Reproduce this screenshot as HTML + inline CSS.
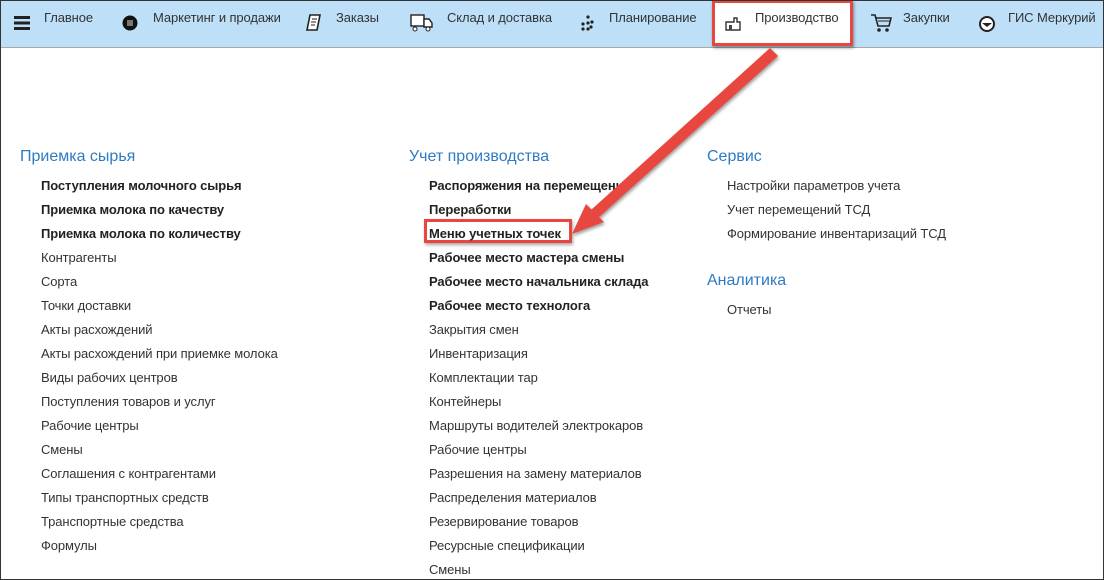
<!DOCTYPE html>
<html><head><meta charset="utf-8"><style>
*{margin:0;padding:0;box-sizing:border-box}
body{width:1104px;height:580px;overflow:hidden;background:#fff;font-family:"Liberation Sans",Arial,sans-serif;position:relative}
.frame{position:absolute;left:0;top:0;width:1104px;height:580px;border:1px solid #333;pointer-events:none}
.top{position:absolute;left:0;top:0;width:1104px;height:48px;background:#bde0f8;border-bottom:1px solid #a8a8a8}
.nav{position:absolute;top:10px;font-size:13px;color:#333;white-space:nowrap;letter-spacing:-0.1px}
.ic{position:absolute}
.prod{position:absolute;left:712px;top:0;width:141px;height:46px;background:#fff;border:3px solid #e8473f;box-shadow:1px 2px 3px rgba(0,0,0,.4)}
.h{position:absolute;font-size:16px;color:#2e7bc4;margin-top:1px}
.it{position:absolute;font-size:13px;color:#333;white-space:nowrap;letter-spacing:-0.1px;margin-top:1px}
.b{font-weight:bold;color:#222}
</style></head><body>
<div class="top"></div>
<div class="prod"></div>
<svg class="ic" style="left:14px;top:16px" width="16" height="14"><rect y="0" width="16" height="3" fill="#222"/><rect y="5.5" width="16" height="3" fill="#222"/><rect y="11" width="16" height="3" fill="#222"/></svg>
<div class="nav" style="left:44px">Главное</div>
<svg class="ic" style="left:122px;top:15px" width="16" height="16"><circle cx="8" cy="8" r="7.5" fill="#111"/><rect x="5" y="5" width="6" height="6" fill="#777"/></svg>
<div class="nav" style="left:153px">Маркетинг и продажи</div>
<svg class="ic" style="left:306px;top:14px" width="16" height="18"><path d="M4 1h10l-3 15H1z" fill="#fff" stroke="#222" stroke-width="1.6"/><path d="M6 5h5M5 8h5M5 11h4" stroke="#222"/></svg>
<div class="nav" style="left:336px">Заказы</div>
<svg class="ic" style="left:410px;top:14px" width="24" height="18"><rect x="1" y="1" width="13" height="11" fill="#fff" stroke="#222" stroke-width="1.4"/><path d="M14 5h5l3 4v4h-8z" fill="#fff" stroke="#222" stroke-width="1.4"/><circle cx="5" cy="15" r="2" fill="#fff" stroke="#222"/><circle cx="18" cy="15" r="2" fill="#fff" stroke="#222"/></svg>
<div class="nav" style="left:447px">Склад и доставка</div>
<svg class="ic" style="left:580px;top:15px" width="14" height="16"><g fill="#222"><circle cx="8" cy="2" r="1.6"/><circle cx="12" cy="7" r="1.6"/><circle cx="8" cy="8" r="1.6"/><circle cx="3" cy="9" r="1.6"/><circle cx="3" cy="14" r="1.6"/><circle cx="8" cy="14" r="1.6"/><circle cx="11" cy="12" r="1.6"/></g></svg>
<div class="nav" style="left:609px">Планирование</div>
<svg class="ic" style="left:725px;top:15px" width="16" height="16"><path d="M1 7h8V3h3v4h3v8H1z" fill="#fff" stroke="#333" stroke-width="1.4"/><rect x="4" y="10" width="3" height="5" fill="#444"/></svg>
<div class="nav" style="left:755px">Производство</div>
<svg class="ic" style="left:870px;top:13px" width="22" height="20"><path d="M1 2h4l3 11h11l2-8H6" fill="none" stroke="#222" stroke-width="1.6"/><path d="M8 8h12" stroke="#222"/><circle cx="9" cy="17" r="1.8" fill="#222"/><circle cx="17" cy="17" r="1.8" fill="#222"/></svg>
<div class="nav" style="left:903px">Закупки</div>
<svg class="ic" style="left:979px;top:16px" width="16" height="16"><circle cx="8" cy="8" r="7" fill="#fff" stroke="#222" stroke-width="2"/><path d="M3 7h10l-5 4z" fill="#222"/></svg>
<div class="nav" style="left:1008px">ГИС Меркурий</div>

<div class="h" style="left:20px;top:147px">Приемка сырья</div>
<div class="h" style="left:409px;top:147px">Учет производства</div>
<div class="h" style="left:707px;top:147px">Сервис</div>
<div class="h" style="left:707px;top:271px">Аналитика</div>

<div class="it b" style="left:41px;top:177px">Поступления молочного сырья</div>
<div class="it b" style="left:41px;top:201px">Приемка молока по качеству</div>
<div class="it b" style="left:41px;top:225px">Приемка молока по количеству</div>
<div class="it" style="left:41px;top:249px">Контрагенты</div>
<div class="it" style="left:41px;top:273px">Сорта</div>
<div class="it" style="left:41px;top:297px">Точки доставки</div>
<div class="it" style="left:41px;top:321px">Акты расхождений</div>
<div class="it" style="left:41px;top:345px">Акты расхождений при приемке молока</div>
<div class="it" style="left:41px;top:369px">Виды рабочих центров</div>
<div class="it" style="left:41px;top:393px">Поступления товаров и услуг</div>
<div class="it" style="left:41px;top:417px">Рабочие центры</div>
<div class="it" style="left:41px;top:441px">Смены</div>
<div class="it" style="left:41px;top:465px">Соглашения с контрагентами</div>
<div class="it" style="left:41px;top:489px">Типы транспортных средств</div>
<div class="it" style="left:41px;top:513px">Транспортные средства</div>
<div class="it" style="left:41px;top:537px">Формулы</div>

<div class="it b" style="left:429px;top:177px">Распоряжения на перемещение</div>
<div class="it b" style="left:429px;top:201px">Переработки</div>
<div style="position:absolute;left:424px;top:219px;width:148px;height:24px;border:3px solid #e8473f;box-shadow:1px 2px 3px rgba(0,0,0,.35)"></div>
<div class="it b" style="left:429px;top:225px">Меню учетных точек</div>
<div class="it b" style="left:429px;top:249px">Рабочее место мастера смены</div>
<div class="it b" style="left:429px;top:273px">Рабочее место начальника склада</div>
<div class="it b" style="left:429px;top:297px">Рабочее место технолога</div>
<div class="it" style="left:429px;top:321px">Закрытия смен</div>
<div class="it" style="left:429px;top:345px">Инвентаризация</div>
<div class="it" style="left:429px;top:369px">Комплектации тар</div>
<div class="it" style="left:429px;top:393px">Контейнеры</div>
<div class="it" style="left:429px;top:417px">Маршруты водителей электрокаров</div>
<div class="it" style="left:429px;top:441px">Рабочие центры</div>
<div class="it" style="left:429px;top:465px">Разрешения на замену материалов</div>
<div class="it" style="left:429px;top:489px">Распределения материалов</div>
<div class="it" style="left:429px;top:513px">Резервирование товаров</div>
<div class="it" style="left:429px;top:537px">Ресурсные спецификации</div>
<div class="it" style="left:429px;top:561px">Смены</div>

<div class="it" style="left:727px;top:177px">Настройки параметров учета</div>
<div class="it" style="left:727px;top:201px">Учет перемещений ТСД</div>
<div class="it" style="left:727px;top:225px">Формирование инвентаризаций ТСД</div>
<div class="it" style="left:727px;top:301px">Отчеты</div>

<svg style="position:absolute;left:0;top:0" width="1104" height="580">
<defs><filter id="s"><feDropShadow dx="1" dy="2" stdDeviation="1.5" flood-opacity=".4"/></filter></defs>
<g filter="url(#s)" fill="#e8473f">
<path d="M770 48 L778 56 L598 218 L591 210 Z"/>
<path d="M572 234 L586 204 L604 222 Z"/>
</g>
</svg>
<div class="frame"></div>
</body></html>
